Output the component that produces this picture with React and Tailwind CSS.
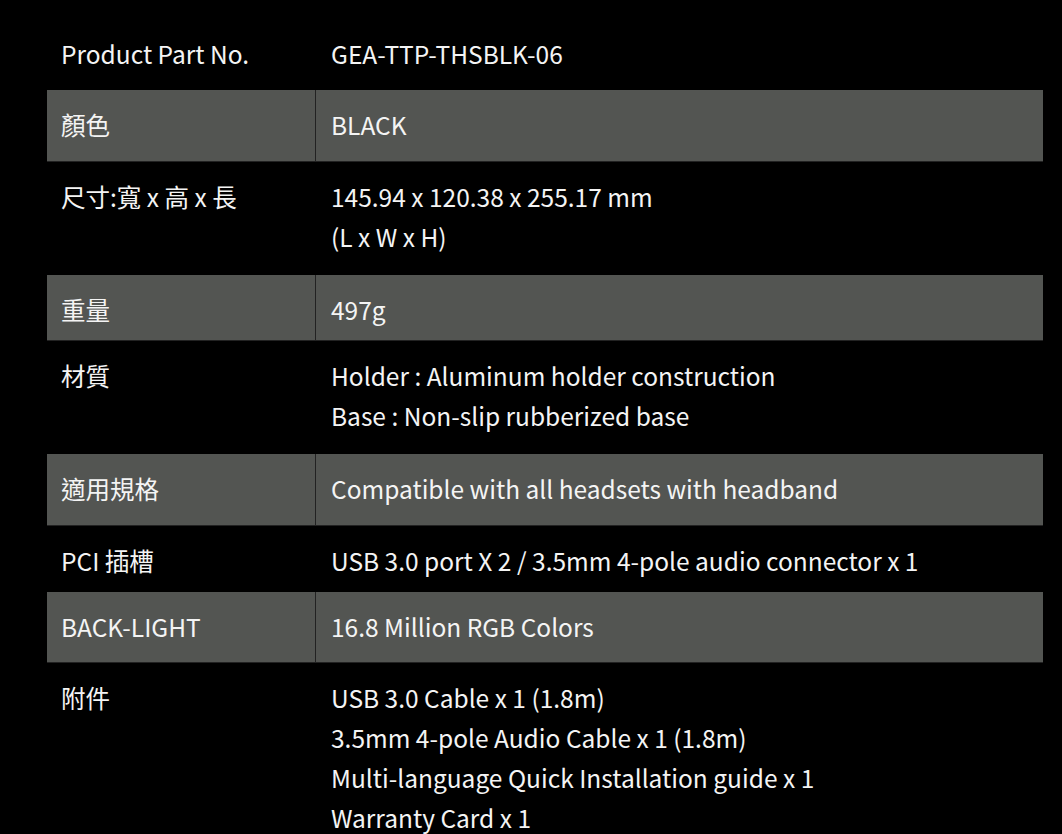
const specs = [
  { label: 'Product Part No.', value: ['GEA-TTP-THSBLK-06'] },
  { label: '顏色', value: ['BLACK'], pb: 'pb-[16px]' },
  { label: '尺寸:寬 x 高 x 長', value: ['145.94 x 120.38 x 255.17 mm', '(L x W x H)'], pb: 'pb-[17px]' },
  { label: '重量', value: ['497g'], pb: 'pb-[10px]' },
  { label: '材質', value: ['Holder : Aluminum holder construction', 'Base : Non-slip rubberized base'], pb: 'pb-[17px]' },
  { label: '適用規格', value: ['Compatible with all headsets with headband'], pb: 'pb-[16px]' },
  { label: 'PCI 插槽', value: ['USB 3.0 port X 2 / 3.5mm 4-pole audio connector x 1'], pb: 'pb-[10px]' },
  { label: 'BACK-LIGHT', value: ['16.8 Million RGB Colors'] },
  {
    label: '附件',
    value: [
      'USB 3.0 Cable x 1 (1.8m)',
      '3.5mm 4-pole Audio Cable x 1 (1.8m)',
      'Multi-language Quick Installation guide x 1',
      'Warranty Card x 1',
    ],
  },
]

function App() {
  return (
    <div
      className="min-h-[834px] w-full bg-black pt-[19px] pl-[47px] text-[24.5px] leading-[40px] text-[#f4f4f4]"
      style={{ fontFamily: '"Noto Sans CJK TC", "Noto Sans", sans-serif' }}
    >
      <div className="w-[996px]">
        {specs.map((row, i) => {
          const odd = i % 2 === 1
          const pb = row.pb || 'pb-[15px]'
          return (
            <div
              key={row.label}
              className={`grid grid-cols-[269px_1fr] border-b ${odd ? 'bg-[#535552] border-[#222]' : 'bg-black border-black'}`}
            >
              <div className={`px-[14px] pt-[15px] ${pb} border-r ${odd ? 'border-[#222]' : 'border-black'}`}>
                {row.label}
              </div>
              <div className={`pl-[15px] pr-4 pt-[15px] ${pb}`}>
                {row.value.map((line) => (
                  <p key={line}>{line}</p>
                ))}
              </div>
            </div>
          )
        })}
      </div>
    </div>
  )
}

export default App
